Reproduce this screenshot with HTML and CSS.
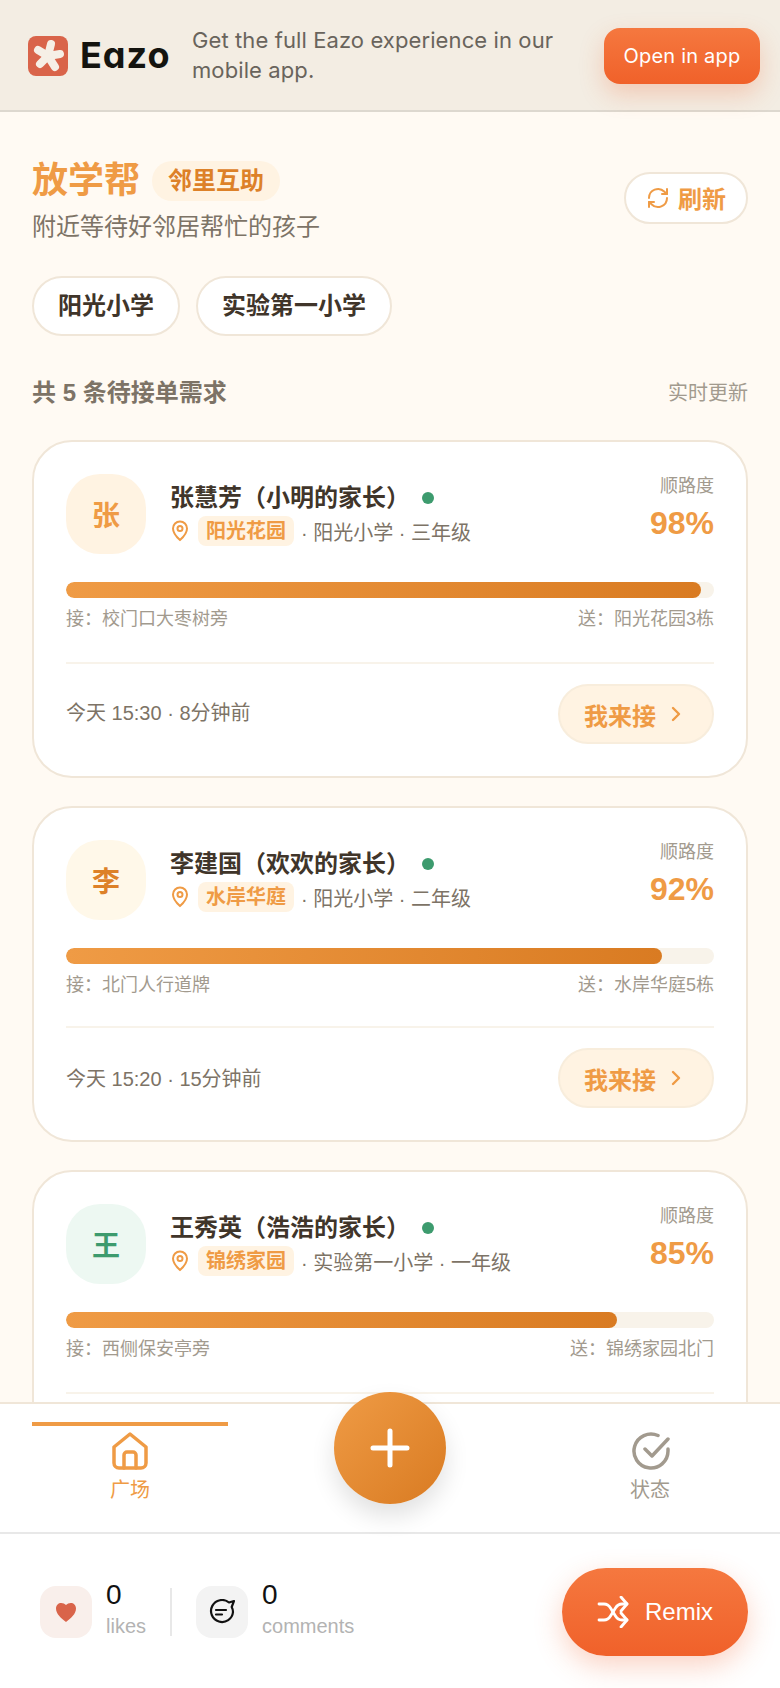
FILE: index.html
```html
<!DOCTYPE html>
<html lang="zh-CN">
<head>
    <meta charset="UTF-8">
    <meta name="viewport" content="width=device-width, initial-scale=1.0">
    <title>放学帮</title>
    <link rel="stylesheet" href="styles.css">
</head>
<body>
<div class="app">
    <div class="banner">
        <div class="brand">
            <svg class="brand-mark" viewBox="0 0 40 40">
                <rect width="40" height="40" rx="8" fill="#d9644a"/>
                <g stroke="#f6efe6" stroke-width="8" stroke-linecap="round">
                    <path d="M20 20L23 8"/>
                    <path d="M20 20L32 18"/>
                    <path d="M20 20L27 31"/>
                    <path d="M20 20L12 28"/>
                    <path d="M20 20L10 14"/>
                </g>
            </svg>
            <span class="brand-name">Eazo</span>
        </div>
        <p class="banner-text">Get the full Eazo experience in our mobile app.</p>
        <button class="open-btn">Open in app</button>
    </div>

    <div class="main">
        <div class="head">
            <div>
                <div class="title-row">
                    <h1>放学帮</h1>
                    <span class="title-tag">邻里互助</span>
                </div>
                <p class="subtitle">附近等待好邻居帮忙的孩子</p>
            </div>
            <button class="refresh">
                <svg viewBox="0 0 24 24" width="24" height="24" fill="none" stroke="#ef9b45" stroke-width="2" stroke-linecap="round" stroke-linejoin="round">
                    <path d="M3 12a9 9 0 0 1 15.500-6.200L21 8"/>
                    <path d="M21 3v5h-5"/>
                    <path d="M21 12a9 9 0 0 1-15.500 6.200L3 16"/>
                    <path d="M3 21v-5h5"/>
                </svg>
                刷新
            </button>
        </div>

        <div class="schools">
            <span class="school">阳光小学</span>
            <span class="school">实验第一小学</span>
        </div>

        <div class="count-row">
            <span class="count">共 5 条待接单需求</span>
            <span class="live">实时更新</span>
        </div>

        <div class="card">
            <div class="card-top">
                <div class="avatar av-orange">张</div>
                <div class="info">
                    <div class="name">张慧芳（小明的家长）<i class="dot"></i></div>
                    <div class="meta">
                        <svg class="pin" viewBox="4 1 16 22"><path d="M12 21s-7-6.200-7-11.500a7 7 0 0 1 14 0C19 14.800 12 21 12 21z"/><circle cx="12" cy="9.500" r="2.500"/></svg>
                        <span class="place">阳光花园</span>
                        <span>· 阳光小学 · 三年级</span>
                    </div>
                </div>
                <div class="score"><span class="score-label">顺路度</span><span class="score-num">98%</span></div>
            </div>
            <div class="bar"><div class="bar-fill" style="width: 98%"></div></div>
            <div class="route"><span>接：校门口大枣树旁</span><span>送：阳光花园3栋</span></div>
            <div class="card-foot">
                <span class="time">今天 15:30 · 8分钟前</span>
                <button class="take">我来接<svg viewBox="0 0 24 24" width="24" height="24" fill="none" stroke="#ef9b45" stroke-width="2.400" stroke-linecap="round" stroke-linejoin="round"><path d="M9 6l6 6-6 6"/></svg></button>
            </div>
        </div>

        <div class="card">
            <div class="card-top">
                <div class="avatar av-yellow">李</div>
                <div class="info">
                    <div class="name">李建国（欢欢的家长）<i class="dot"></i></div>
                    <div class="meta">
                        <svg class="pin" viewBox="4 1 16 22"><path d="M12 21s-7-6.200-7-11.500a7 7 0 0 1 14 0C19 14.800 12 21 12 21z"/><circle cx="12" cy="9.500" r="2.500"/></svg>
                        <span class="place">水岸华庭</span>
                        <span>· 阳光小学 · 二年级</span>
                    </div>
                </div>
                <div class="score"><span class="score-label">顺路度</span><span class="score-num">92%</span></div>
            </div>
            <div class="bar"><div class="bar-fill" style="width: 92%"></div></div>
            <div class="route"><span>接：北门人行道牌</span><span>送：水岸华庭5栋</span></div>
            <div class="card-foot foot-tight">
                <span class="time">今天 15:20 · 15分钟前</span>
                <button class="take">我来接<svg viewBox="0 0 24 24" width="24" height="24" fill="none" stroke="#ef9b45" stroke-width="2.400" stroke-linecap="round" stroke-linejoin="round"><path d="M9 6l6 6-6 6"/></svg></button>
            </div>
        </div>

        <div class="card">
            <div class="card-top">
                <div class="avatar av-green">王</div>
                <div class="info">
                    <div class="name">王秀英（浩浩的家长）<i class="dot"></i></div>
                    <div class="meta">
                        <svg class="pin" viewBox="4 1 16 22"><path d="M12 21s-7-6.200-7-11.500a7 7 0 0 1 14 0C19 14.800 12 21 12 21z"/><circle cx="12" cy="9.500" r="2.500"/></svg>
                        <span class="place">锦绣家园</span>
                        <span>· 实验第一小学 · 一年级</span>
                    </div>
                </div>
                <div class="score"><span class="score-label">顺路度</span><span class="score-num">85%</span></div>
            </div>
            <div class="bar"><div class="bar-fill" style="width: 85%"></div></div>
            <div class="route"><span>接：西侧保安亭旁</span><span>送：锦绣家园北门</span></div>
            <div class="card-foot"></div>
        </div>
    </div>

    <div class="tabs">
        <div class="tab tab-on">
            <svg viewBox="0 0 40 40" width="40" height="40" fill="none" stroke="#ef9b45" stroke-width="3.500" stroke-linecap="round" stroke-linejoin="round">
                <path d="M4 16L20 3l16 13v16a5 5 0 0 1-5 5H9a5 5 0 0 1-5-5z"/>
                <path d="M14 37V24a3 3 0 0 1 3-3h6a3 3 0 0 1 3 3v13"/>
            </svg>
            <span>广场</span>
        </div>
        <div class="tab-mid"></div>
        <div class="tab">
            <svg viewBox="-2 0 40 40" width="40" height="40" fill="none" stroke="#a29a8e" stroke-width="3.500" stroke-linecap="round" stroke-linejoin="round">
                <path d="M36 18v2a17 17 0 1 1-10-15.500"/>
                <path d="M13 18l7 7L36 8"/>
            </svg>
            <span>状态</span>
        </div>
        <button class="fab">
            <svg viewBox="0 0 40 40" width="40" height="40" fill="none" stroke="#fff" stroke-width="5" stroke-linecap="round"><path d="M20 3v34M3 20h34"/></svg>
        </button>
    </div>

    <div class="footer">
        <div class="stat">
            <div class="stat-icon icon-like">
                <svg viewBox="0 0 24 24" width="24" height="24" fill="#d9644a"><path d="M12 22C7 18 2 14 2 8.500 2 5 4.500 3 7.200 3 9 3 10.800 3.800 12 5c1.200-1.200 3-2 4.800-2C19.500 3 22 5 22 8.500 22 14 17 18 12 22z"/></svg>
            </div>
            <div class="stat-text"><span class="stat-num">0</span><span class="stat-label">likes</span></div>
        </div>
        <div class="stat-line"></div>
        <div class="stat">
            <div class="stat-icon icon-comment">
                <svg viewBox="0 0 26 26" width="26" height="26" fill="none" stroke="#111" stroke-width="2.200" stroke-linecap="round" stroke-linejoin="round">
                    <path d="M25 2l-5 1.500A11 11 0 1 0 24 13c0-2-.5-3.500-1.300-5z"/>
                    <path d="M7 11h10M7 15.500h6"/>
                </svg>
            </div>
            <div class="stat-text"><span class="stat-num">0</span><span class="stat-label">comments</span></div>
        </div>
        <button class="remix">
            <svg viewBox="0 0 32 32" width="32" height="32" fill="none" stroke="#fff" stroke-width="2.800" stroke-linecap="round" stroke-linejoin="round">
                <path d="M2 8h5c3 0 5 1.500 6.500 4l5 8c1.500 2.500 3.500 4 6.500 4h5"/>
                <path d="M2 24h5c3 0 5-1.500 6.500-4l5-8c1.500-2.500 3.500-4 6.500-4h5"/>
                <path d="M24 1l6 7-6 7M24 17l6 7-6 7"/>
            </svg>
            Remix
        </button>
    </div>
</div>
</body>
</html>
```

FILE: styles.css
```css
* {
    box-sizing: border-box;
}

body {
    margin: 0;
    font-family: "Liberation Sans", "Noto Sans CJK JP", sans-serif;
    background-color: #fffaf3;
}

button {
    font-family: inherit;
    border: none;
    padding: 0;
}

p, h1 {
    margin: 0;
}

.app {
    display: flex;
    flex-direction: column;
    height: 1688px;
    overflow: hidden;
}

/* top banner */
.banner {
    flex: none;
    height: 112px;
    display: flex;
    align-items: center;
    padding: 0 20px 0 28px;
    font-family: Inter, sans-serif;
    background-color: #f3ede3;
    border-bottom: 2px solid #ddd8cf;
    position: relative;
    z-index: 3;
}

.brand {
    flex: none;
    width: 164px;
    display: flex;
    align-items: center;
    gap: 12px;
}

.brand-mark {
    width: 40px;
    height: 40px;
    margin-top: 2px;
}

.brand-name {
    font-size: 36px;
    font-weight: 700;
    color: #14140f;
    letter-spacing: 1px;
    font-feature-settings: "cv11";
}

.banner-text {
    flex: 1;
    font-size: 22px;
    line-height: 30px;
    letter-spacing: 0.1px;
    color: #69645c;
}

.open-btn {
    width: 156px;
    height: 56px;
    margin-top: 2px;
    border-radius: 16px;
    font-size: 20px;
    letter-spacing: 0.2px;
    color: #fff;
    background: linear-gradient(180deg, #f5783f, #f0612a);
    box-shadow: 0 10px 24px rgba(240, 97, 42, 0.25);
}

/* main */
.main {
    flex: 1;
    min-height: 0;
    overflow: hidden;
    padding: 47px 32px 0;
}

.head {
    display: flex;
    justify-content: space-between;
    align-items: center;
}

.title-row {
    display: flex;
    align-items: center;
    gap: 12px;
}

h1 {
    font-size: 36px;
    font-weight: 700;
    color: #ef9b45;
    line-height: 44px;
}

.title-tag {
    padding: 0 16px;
    height: 40px;
    line-height: 40px;
    border-radius: 20px;
    font-size: 24px;
    font-weight: 700;
    color: #dd8128;
    background-color: #fff3e2;
}

.subtitle {
    margin-top: 7px;
    font-size: 24px;
    line-height: 34px;
    color: #7d7366;
}

.refresh {
    display: flex;
    align-items: center;
    justify-content: center;
    gap: 8px;
    width: 124px;
    height: 52px;
    margin-bottom: 8px;
    font-size: 24px;
    font-weight: 700;
    color: #ef9b45;
    background-color: #fff;
    border: 2px solid #f0e6d8;
    border-radius: 26px;
}

.schools {
    display: flex;
    gap: 16px;
    margin-top: 32px;
}

.school {
    height: 60px;
    line-height: 56px;
    padding: 0 24px;
    font-size: 24px;
    font-weight: 700;
    color: #40352a;
    background-color: #fff;
    border: 2px solid #f0e6d8;
    border-radius: 30px;
}

.count-row {
    display: flex;
    justify-content: space-between;
    align-items: center;
    margin-top: 40px;
    margin-bottom: 30px;
    line-height: 34px;
}

.count {
    font-size: 24px;
    font-weight: 700;
    color: #7d7366;
}

.live {
    font-size: 20px;
    color: #a29a8e;
}

/* cards */
.card {
    padding: 32px;
    margin-bottom: 28px;
    background-color: #fff;
    border: 2px solid #f0e6d8;
    border-radius: 40px;
}

.card-top {
    display: flex;
    align-items: center;
}

.avatar {
    flex: none;
    width: 80px;
    height: 80px;
    display: flex;
    align-items: center;
    justify-content: center;
    border-radius: 34px;
    font-size: 28px;
    font-weight: 700;
}

.av-orange {
    color: #ef9b45;
    background-color: #fff3e2;
}

.av-yellow {
    color: #dd8128;
    background-color: #fff8e9;
}

.av-green {
    color: #3d9b6e;
    background-color: #edf8f2;
}

.info {
    flex: 1;
    margin-left: 24px;
}

.name {
    display: flex;
    align-items: center;
    font-size: 24px;
    line-height: 34px;
    font-weight: 700;
    color: #40352a;
}

.dot {
    width: 12px;
    height: 12px;
    margin-left: 12px;
    border-radius: 50%;
    background-color: #3d9b6e;
}

.meta {
    display: flex;
    align-items: center;
    height: 32px;
    font-size: 20px;
    color: #7d7366;
}

.pin {
    width: 18px;
    height: 22px;
    margin: 0 9px 0 1px;
    fill: none;
    stroke: #ef9b45;
    stroke-width: 2;
}

.place {
    padding: 0 8px;
    height: 30px;
    line-height: 30px;
    margin-right: 7px;
    border-radius: 8px;
    font-weight: 700;
    color: #ef9b45;
    background-color: #fff3e2;
}

.score {
    align-self: flex-start;
    display: flex;
    flex-direction: column;
    align-items: flex-end;
}

.score-label {
    font-size: 18px;
    line-height: 24px;
    color: #a29a8e;
}

.score-num {
    font-size: 32px;
    line-height: 50px;
    font-weight: 700;
    color: #ef9b45;
}

.bar {
    height: 16px;
    margin-top: 28px;
    border-radius: 8px;
    background-color: #f8f3ea;
    overflow: hidden;
}

.bar-fill {
    height: 100%;
    border-radius: 8px;
    background: linear-gradient(90deg, #ef9b45, #d97b22);
}

.route {
    display: flex;
    justify-content: space-between;
    margin-top: 8px;
    font-size: 18px;
    line-height: 26px;
    color: #a29a8e;
}

.card-foot {
    display: flex;
    justify-content: space-between;
    align-items: center;
    margin-top: 30px;
    padding-top: 20px;
    border-top: 2px solid #f8f3ea;
}

.foot-tight {
    margin-top: 28px;
}

.time {
    margin-bottom: 6px;
    font-size: 20px;
    color: #7d7366;
}

.foot-tight .time {
    margin-bottom: 2px;
}

.take {
    display: flex;
    align-items: center;
    justify-content: center;
    gap: 8px;
    width: 156px;
    height: 60px;
    font-size: 24px;
    font-weight: 700;
    color: #ef9b45;
    background-color: #fff3e2;
    border: 2px solid #f8eddc;
    border-radius: 30px;
}

/* tab bar */
.tabs {
    flex: none;
    position: relative;
    height: 130px;
    display: flex;
    padding: 18px 32px 0;
    background-color: #fff;
    border-top: 2px solid #f0e6d8;
}

.tab {
    width: 196px;
    height: 84px;
    display: flex;
    flex-direction: column;
    align-items: center;
    padding-top: 9px;
    font-size: 20px;
    line-height: 28px;
    color: #a29a8e;
}

.tab span {
    margin-top: 5px;
}

.tab-on {
    color: #ef9b45;
    border-top: 4px solid #ef9b45;
    padding-top: 5px;
}

.tab-mid {
    flex: 1;
}

.fab {
    position: absolute;
    left: 334px;
    top: -12px;
    width: 112px;
    height: 112px;
    display: flex;
    align-items: center;
    justify-content: center;
    border-radius: 50%;
    background: linear-gradient(135deg, #ef9b45, #d97b22);
    box-shadow: 0 12px 24px rgba(0, 0, 0, 0.12);
}

/* footer */
.footer {
    flex: none;
    height: 156px;
    display: flex;
    align-items: center;
    padding: 2px 32px 0 40px;
    background-color: #fff;
    border-top: 2px solid #e8e8e8;
}

.stat {
    display: flex;
    align-items: center;
    gap: 14px;
}

.stat-icon {
    width: 52px;
    height: 52px;
    display: flex;
    align-items: center;
    justify-content: center;
    border-radius: 16px;
}

.icon-like {
    background-color: #f9efeb;
}

.icon-comment {
    background-color: #f3f3f3;
}

.stat-text {
    display: flex;
    flex-direction: column;
    margin-bottom: 6px;
}

.stat-num {
    font-size: 28px;
    line-height: 34px;
    color: #111;
}

.stat-label {
    font-size: 20px;
    line-height: 28px;
    color: #b3b3b3;
}

.stat-line {
    width: 2px;
    height: 48px;
    margin: 0 24px;
    background-color: #e8e8e8;
}

.remix {
    margin-left: auto;
    display: flex;
    align-items: center;
    justify-content: center;
    gap: 16px;
    width: 186px;
    height: 88px;
    font-size: 24px;
    color: #fff;
    border-radius: 44px;
    background: linear-gradient(180deg, #f5783f, #f0612a);
    box-shadow: 0 10px 28px rgba(240, 97, 42, 0.28);
}
```
